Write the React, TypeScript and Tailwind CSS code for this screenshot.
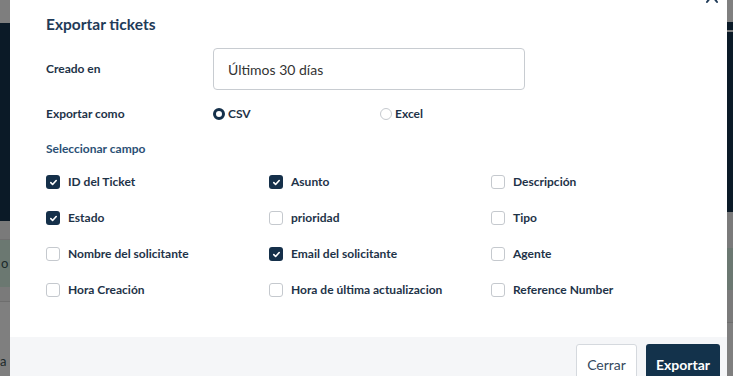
import { useState } from 'react'

type Field = {
  id: string
  label: string
  checked: boolean
}

const initialFields: Field[] = [
  { id: 'ticket_id', label: 'ID del Ticket', checked: true },
  { id: 'subject', label: 'Asunto', checked: true },
  { id: 'description', label: 'Descripción', checked: false },
  { id: 'status', label: 'Estado', checked: true },
  { id: 'priority', label: 'prioridad', checked: false },
  { id: 'type', label: 'Tipo', checked: false },
  { id: 'requester_name', label: 'Nombre del solicitante', checked: false },
  { id: 'requester_email', label: 'Email del solicitante', checked: true },
  { id: 'agent', label: 'Agente', checked: false },
  { id: 'created_at', label: 'Hora Creación', checked: false },
  { id: 'updated_at', label: 'Hora de última actualizacion', checked: false },
  { id: 'reference', label: 'Reference Number', checked: false },
]

function CheckBox({ checked }: { checked: boolean }) {
  if (checked) {
    return (
      <span className="w-[14px] h-[14px] rounded-[3px] bg-[#15304a] flex items-center justify-center shrink-0">
        <svg width="9" height="9" viewBox="0 0 10 10" fill="none">
          <path d="M2 5.2l2 2 4-4.4" stroke="white" strokeWidth="1.8" strokeLinecap="round" strokeLinejoin="round" />
        </svg>
      </span>
    )
  }
  return <span className="w-[14px] h-[14px] rounded-[3px] border border-[#c5c9ce] bg-white shrink-0" />
}

export default function App() {
  const [fields, setFields] = useState(initialFields)
  const [format, setFormat] = useState<'csv' | 'excel'>('csv')

  const toggle = (id: string) => {
    setFields((rows) => rows.map((f) => (f.id === id ? { ...f, checked: !f.checked } : f)))
  }

  return (
    <div
      className="relative w-[733px] h-[376px] overflow-hidden bg-[#7d7d7d]"
      style={{ fontFamily: 'Lato, "Liberation Sans", sans-serif' }}
    >
      {/* page behind the backdrop */}
      <div className="flex justify-between h-full">
        <div className="w-[10px] flex flex-col text-[#1c2a2a] text-[13px] leading-none">
          <div className="h-[23px] bg-[#7e7e7e]" />
          <div className="h-[198px] bg-[#0b1a27]" />
          <div className="h-[19px] bg-[#7a7a7a] border-b border-[#6f6f6f]" />
          <div className="h-[47px] bg-[#6b7871] flex items-center pl-[1px]">o</div>
          <div className="h-[15px] bg-[#7a7a7a] border-b border-[#6e6e6e]" />
          <div className="flex-1 bg-[#7f7f7f] flex items-end pb-[8px]">a</div>
        </div>
        <div className="w-[6px] flex flex-col">
          <div className="h-[22px] bg-[#808080]" />
          <div className="h-[8px] bg-[#0b1a27]" />
          <div className="h-[2px] bg-[#808080]" />
          <div className="h-[180px] bg-[#0b1a27]" />
          <div className="h-[36px] bg-[#7a7a7a]" />
          <div className="h-[42px] bg-[#6b7871]" />
          <div className="h-[33px] bg-[#7a7a7a] border-b border-[#6e6e6e]" />
          <div className="flex-1 bg-[#7f7f7f]" />
        </div>
      </div>

      {/* modal */}
      <div className="absolute left-[10px] top-[-12px] w-[717px] bg-white flex flex-col">
        <div className="relative px-[36px] pt-[25px] pb-[12px]">
          <h2 className="text-[15.5px] font-bold text-[#1f3b58]">Exportar tickets</h2>
          <button type="button" aria-label="Cerrar" className="absolute right-[8px] top-[-2px]">
            <svg width="14" height="18" viewBox="0 0 14 18" fill="none">
              <path d="M2 3l10 13M12 3L2 16" stroke="#1f3b58" strokeWidth="2" strokeLinecap="round" />
            </svg>
          </button>
        </div>

        <div className="px-[36px] pb-[39px] text-[#1e3348]">
          <div className="flex items-center h-[42px]">
            <div className="w-[167px] text-[12px] font-bold">Creado en</div>
            <div className="w-[312px] h-[42px] rounded-[4px] border border-[#c8ccd1] flex items-center px-[14px] text-[14px] text-[#333]">
              Últimos 30 días
            </div>
          </div>

          <div className="flex items-center h-[20px] mt-[14px]">
            <div className="w-[167px] text-[12px] font-bold">Exportar como</div>
            <label className="w-[167px] flex items-center gap-[3px] text-[12px] font-bold cursor-pointer" onClick={() => setFormat('csv')}>
              {format === 'csv' ? (
                <span className="w-[12px] h-[12px] rounded-full border-[3.5px] border-[#15304a] bg-white" />
              ) : (
                <span className="w-[12px] h-[12px] rounded-full border border-[#c5c9ce] bg-white" />
              )}
              CSV
            </label>
            <label className="flex items-center gap-[3px] text-[12px] font-bold cursor-pointer" onClick={() => setFormat('excel')}>
              {format === 'excel' ? (
                <span className="w-[12px] h-[12px] rounded-full border-[3.5px] border-[#15304a] bg-white" />
              ) : (
                <span className="w-[12px] h-[12px] rounded-full border border-[#c5c9ce] bg-white" />
              )}
              Excel
            </label>
          </div>

          <div className="mt-[16px] text-[12px] font-bold text-[#2b5075]">Seleccionar campo</div>

          <div className="grid grid-cols-[223px_222px_1fr] gap-y-[20px] mt-[16px]">
            {fields.map((f) => (
              <label
                key={f.id}
                className="flex items-center gap-[8px] h-[16px] text-[12px] font-bold cursor-pointer"
                onClick={() => toggle(f.id)}
              >
                <CheckBox checked={f.checked} />
                {f.label}
              </label>
            ))}
          </div>
        </div>

        <div className="bg-[#f5f6f8] h-[60px] flex justify-end gap-[9px] pr-[7px] pt-[7px]">
          <button type="button" className="h-[40px] px-[10px] rounded-[3px] border border-[#d5d9de] bg-white text-[14px] text-[#34495e]">
            Cerrar
          </button>
          <button type="button" className="h-[40px] px-[10px] rounded-[3px] bg-[#13324b] text-white text-[14px] font-bold">
            Exportar
          </button>
        </div>
      </div>
    </div>
  )
}
